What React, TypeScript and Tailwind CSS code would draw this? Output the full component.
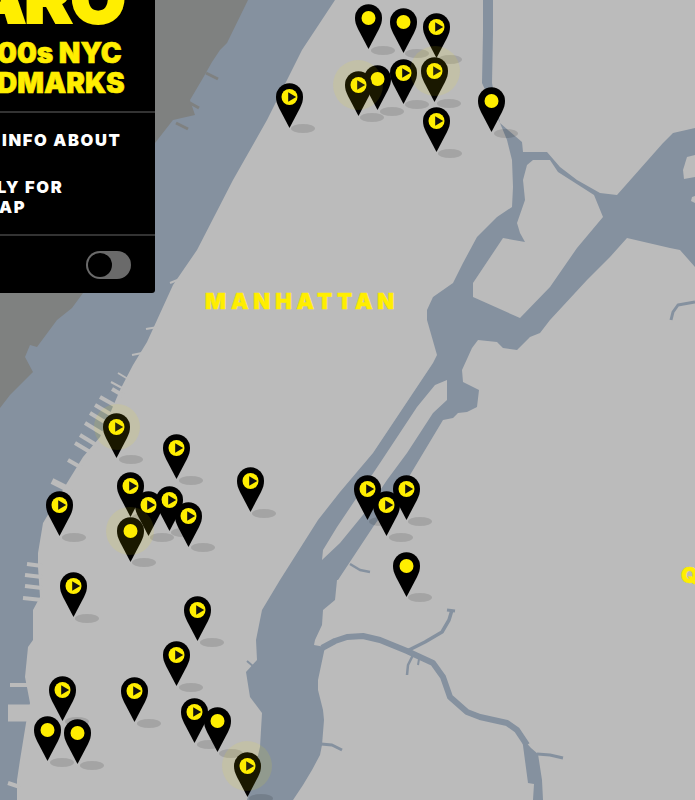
import React from 'react';

const LAND = '#bbbbbb';
const WATER = '#85919f';
const JERSEY = '#7f8180';
const YELLOW = '#ffee00';

type PinData = { x: number; tip: number; play?: boolean; glow?: number };

const pins: PinData[] = [
  { x: 368.5, tip: 49 },
  { x: 403, tip: 52.5 },
  { x: 436, tip: 58, play: true },
  { x: 358, tip: 116, play: true, glow: 50 },
  { x: 377.5, tip: 110 },
  { x: 403, tip: 103.5, play: true },
  { x: 434.5, tip: 102, play: true, glow: 50 },
  { x: 436, tip: 152, play: true },
  { x: 491.5, tip: 132 },
  { x: 289, tip: 127.5, play: true },
  { x: 116.5, tip: 458, play: true, glow: 46 },
  { x: 176.5, tip: 479, play: true },
  { x: 250, tip: 512, play: true },
  { x: 130, tip: 516.5, play: true },
  { x: 148, tip: 536, play: true },
  { x: 169, tip: 531, play: true },
  { x: 188.5, tip: 546.5, play: true },
  { x: 130, tip: 561.5, glow: 48 },
  { x: 59.5, tip: 536, play: true },
  { x: 73, tip: 617, play: true },
  { x: 197.5, tip: 641, play: true },
  { x: 176.5, tip: 686, play: true },
  { x: 62.5, tip: 720.5, play: true },
  { x: 134.5, tip: 722, play: true },
  { x: 194.5, tip: 743, play: true },
  { x: 217, tip: 752 },
  { x: 47.5, tip: 761 },
  { x: 77.5, tip: 764 },
  { x: 247, tip: 797, play: true, glow: 50 },
  { x: 367, tip: 520, play: true },
  { x: 406, tip: 520, play: true },
  { x: 386.5, tip: 536, play: true },
  { x: 406, tip: 596.5 },
];

const sorted = [...pins].sort((a, b) => a.tip - b.tip);

function Pin({ pin }: { pin: PinData }) {
  return (
    <svg
      className="absolute"
      style={{ left: pin.x - 13.5, top: pin.tip - 45 }}
      width="27"
      height="45"
      viewBox="0 0 27 45"
    >
      <path d="M13.5 45L3 25C1 21 0 18 0 13.8A13.5 13.5 0 0 1 27 13.8C27 18 26 21 24 25Z" fill="#000" />
      {pin.play ? (
        <>
          <circle cx="13.5" cy="14" r="8" fill={YELLOW} />
          <path d="M12.2 9.2L20.2 14L12.2 18.8Z" fill="#111" />
        </>
      ) : (
        <circle cx="13.5" cy="14" r="7" fill={YELLOW} />
      )}
    </svg>
  );
}

function WaterMap() {
  return (
    <svg className="absolute inset-0" width="695" height="800" viewBox="0 0 695 800">
      {/* Hudson */}
      <path
        fill={WATER}
        d="M0 0L335 0L302 50L287 80L267 120L233 180L197 250L173 285L147 342L133 365L120 390L100 437L83 457L67 483L43 523L38 553L38 567L40 597L33 610L33 640L28 647L25 677L30 703L26 723L20 760L17 780L17 800L0 800Z"
      />
      {/* Jersey side */}
      <path
        fill={JERSEY}
        d="M0 0L248 0L227 43L220 50L212 62L203 78L190 100L195 115L173 120L155 143L83 293L72 308L57 320L37 347L30 345L25 357L33 372L10 395L0 408Z"
      />
      <g stroke={JERSEY} strokeWidth="3" fill="none">
        <path d="M206 73L218 79" />
        <path d="M190 103L199 108" />
        <path d="M176 123L188 129" />
      </g>
      {/* piers */}
      <g stroke={LAND} strokeWidth="4" fill="none">
        <path d="M112 389L124 396" />
        <path d="M100 397L116 406" />
        <path d="M95 405L112 415" />
        <path d="M90 413L108 424" />
        <path d="M85 423L103 434" />
        <path d="M80 435L98 446" />
        <path d="M75 443L90 452" />
        <path d="M68 460L82 468" />
        <path d="M52 481L72 491" strokeWidth="6" />
        <path d="M27 564L42 566" />
        <path d="M25 575L42 577" />
        <path d="M25 586L42 588" />
        <path d="M23 598L42 600" />
        <path d="M10 685L30 685" />
        <path d="M8 713L30 713" strokeWidth="17" />
        <path d="M8 783L20 787" />
      </g>
      <g stroke={LAND} strokeWidth="2" fill="none">
        <path d="M146 329L158 327" />
        <path d="M132 355L142 353" />
        <path d="M118 373L128 379" />
        <path d="M111 382L124 389" />
        <path d="M170 283L180 279" />
      </g>
      {/* East River, Harlem River and Hell Gate */}
      <path
        fill={WATER}
        d="M483 0L493 0L493 33L492 83L500 123L522 142L523 152L547 152L560 167L577 180L600 193L617 195L663 143L673 133L695 128L695 267L680 250L670 248L627 238L610 257L587 280L550 320L540 333L530 337L517 350L503 348L497 342L478 340L472 348L462 370L463 382L479 390L477 407L467 412L458 413L453 418L443 420L407 480L373 527L338 580L337 580L335 600L323 610L322 625L315 640L314 645L325 647L318 680L318 690L323 710L324 720L322 745L320 755L312 770L303 785L293 800L247 800L250 790L260 747L262 713L250 697L246 672L257 660L256 640L262 610L280 580L318 520L340 492L373 453L413 393L433 363L437 355L427 320L427 310L433 297L453 283L463 263L477 237L497 217L512 207L513 187L512 160L507 140L500 123L482 83L483 33Z"
      />
      {/* Roosevelt Island */}
      <path
        fill={LAND}
        d="M322 560L323 550L337 527L380 463L417 407L435 385L447 380L447 400L433 413L407 453L387 480L367 510L340 543Z"
      />
      {/* Randall's and Wards */}
      <path
        fill={LAND}
        d="M533 160L550 160L558 172L594 195L603 217L577 248L550 287L520 318L473 297L473 283L503 238L525 242L520 233L517 223L525 200L523 180L527 165Z"
      />
      <path fill={LAND} d="M687 157L695 155L695 177L684 179L683 170Z" />
      <path fill={LAND} d="M692 197L695 196L695 203L691 201Z" />
      {/* creeks */}
      <g stroke={WATER} fill="none" strokeLinejoin="round">
        <path
          strokeWidth="6"
          d="M322 648L335 641L347 637L363 636L380 640L407 651L433 663L443 677L450 697L467 712L480 717L507 723L517 730L527 745"
        />
        <path strokeWidth="3.5" d="M407 651L425 642L442 632L449 620L452 610" />
        <path strokeWidth="3" d="M447 610L455 611" />
        <path strokeWidth="2.5" d="M413 655L408 665L407 675" />
        <path strokeWidth="2" d="M419 659L418 665" />
        <path strokeWidth="3" d="M537 754L550 755L563 758" />
        <path strokeWidth="2.5" d="M350 564L360 570L370 572" />
        <path strokeWidth="3" d="M695 302L678 305L673 312L671 320" />
        <path strokeWidth="3" d="M321 744L332 745L342 750" />
        <path strokeWidth="2" d="M247 661L254 667" />
      </g>
      <path fill={WATER} d="M522 738L531 748L538 754L542 780L543 800L533 800L534 784L528 783Z" />
    </svg>
  );
}

function Panel() {
  return (
    <div className="absolute left-0 top-0 flex h-[293px] w-[155px] flex-col overflow-hidden rounded-br-[3px] bg-black font-['Inter',sans-serif]">
      <div className="h-[113px] border-b-2 border-[#333] text-[#ffee00]">
        <div className="flex h-[28px] items-end overflow-hidden">
          <span className="-ml-[31px] mb-[-5px] whitespace-nowrap text-[72px] leading-none font-black tracking-[-2px] [-webkit-text-stroke:2px_#ffee00]">ARO</span>
        </div>
        <p className="-ml-[3px] mt-[10px] whitespace-nowrap text-[28px] leading-[30px] font-black [-webkit-text-stroke:0.6px_#ffee00]">00s NYC</p>
        <p className="-ml-[3px] whitespace-nowrap text-[28px] leading-[30px] font-black [-webkit-text-stroke:0.6px_#ffee00]">DMARKS</p>
      </div>
      <div className="h-[123px] border-b-2 border-[#333] pt-[17px] text-[16.5px] leading-[20px] font-black tracking-[1.6px] text-white">
        <p className="ml-[2px] whitespace-nowrap">INFO ABOUT</p>
        <p className="-ml-[3px] mt-[27px] whitespace-nowrap">LY FOR</p>
        <p className="-ml-[1px] whitespace-nowrap">AP</p>
      </div>
      <div className="flex flex-1 items-center justify-end pr-[24px]">
        <div className="flex h-[28px] w-[45px] items-center rounded-full bg-[#6a6a6a] p-[2px]">
          <div className="h-[24px] w-[24px] rounded-full bg-black" />
        </div>
      </div>
    </div>
  );
}

export default function App() {
  return (
    <div className="relative h-[800px] w-[695px] overflow-hidden bg-[#bbbbbb]">
      <WaterMap />
      {pins.map((p, i) => (
        <div
          key={i}
          className="absolute h-[9px] w-[24px] rounded-[50%] bg-black/12 blur-[0.5px]"
          style={{ left: p.x + 2, top: p.tip - 3.5 }}
        />
      ))}
      {sorted.map((p, i) => (
        <Pin key={i} pin={p} />
      ))}
      {pins
        .filter((p) => p.glow)
        .map((p, i) => (
          <div
            key={i}
            className="absolute rounded-full bg-[#ffee00]/10"
            style={{ width: p.glow, height: p.glow, left: p.x - p.glow! / 2, top: p.tip - 31 - p.glow! / 2 }}
          />
        ))}
      <span className="absolute left-[205px] top-[288px] font-['Inter',sans-serif] text-[22px] leading-[26px] font-black tracking-[4.9px] text-[#ffee00] [-webkit-text-stroke:0.5px_#ffee00]">
        MANHATTAN
      </span>
      <span className="absolute left-[681px] top-[562px] font-['Inter',sans-serif] text-[22px] leading-[26px] font-black text-[#ffee00] [-webkit-text-stroke:0.5px_#ffee00]">
        Q
      </span>
      <Panel />
    </div>
  );
}
